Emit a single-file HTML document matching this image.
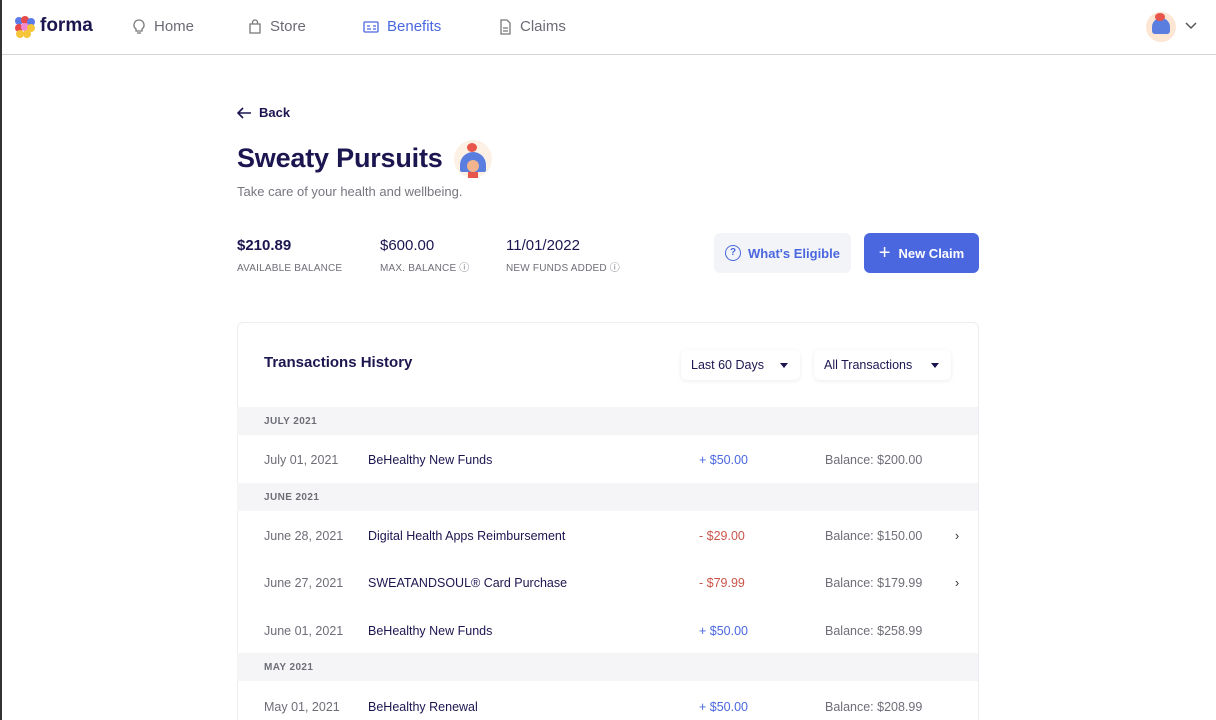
<!DOCTYPE html>
<html><head><meta charset="utf-8"><style>
*{box-sizing:border-box;margin:0;padding:0}
html,body{width:1216px;height:720px;overflow:hidden}
body{background:#fff;font-family:"Liberation Sans",sans-serif;color:#1c1650;position:relative}
.nav{position:absolute;left:0;top:0;width:1216px;height:55px;border-bottom:1px solid #d4d4d8;}
.nav .it{position:absolute;top:18px;font-size:15px;color:#6b6b76;display:flex;align-items:center;gap:8px}
.abs{position:absolute}
.lbl{font-size:10px;color:#6e6e78;letter-spacing:.2px;line-height:12px}
.val{font-size:15px;font-weight:bold;color:#1c1650}
.row{position:absolute;left:237px;width:741px;font-size:12.5px}
.sec{position:absolute;left:237px;width:741px;height:28px;background:#f5f5f7;font-size:10px;font-weight:bold;color:#6e6e78;padding:9px 0 0 27px;letter-spacing:.4px}
.row span{position:absolute}
.d{left:27px;color:#6e6e78}.n{left:131px;color:#1c1650}.a{left:462px}.b{left:588px;color:#6e6e78}
.pos{color:#4a67e0}.neg{color:#c9544a}
.chev{left:718px;color:#333}
.dd{position:absolute;top:350px;height:30px;border-radius:6px;box-shadow:0 1px 4px rgba(0,0,0,.08);font-size:12.5px;padding:8px 0 0 10px}
.dd i{position:absolute;right:12px;top:13px;border:4px solid transparent;border-top:5px solid #1c1650}
</style></head><body>
<div class="abs" style="left:0;top:0;width:2px;height:720px;background:#333;z-index:5"></div>
<div class="nav">
 <svg class="abs" style="left:14px;top:16px" width="22" height="22" viewBox="0 0 22 22">
  <circle cx="5" cy="5" r="4" fill="#5b7be8"/><circle cx="11" cy="4" r="4" fill="#e84a4a"/><circle cx="17" cy="6" r="4" fill="#5b7be8"/>
  <circle cx="5" cy="12" r="4" fill="#e84a4a"/><circle cx="11" cy="11" r="4" fill="#f08ad0"/><circle cx="17" cy="12" r="4" fill="#f5c53a"/>
  <circle cx="6" cy="18" r="4" fill="#f5c53a"/><circle cx="13" cy="18" r="4" fill="#f5c53a"/></svg>
 <div class="abs" style="left:40px;top:15px;font-size:19px;font-weight:bold;color:#1c1650">forma</div>
 <div class="it" style="left:132px"><svg width="14" height="16" viewBox="0 0 14 16" fill="none" stroke="#777" stroke-width="1.3"><path d="M7 1a5 5 0 0 0-3 9v2h6v-2a5 5 0 0 0-3-9zM5 14h4"/></svg>Home</div>
 <div class="it" style="left:248px"><svg width="14" height="16" viewBox="0 0 14 16" fill="none" stroke="#777" stroke-width="1.3"><path d="M2 5h10v9H2zM4.5 5V3.5a2.5 2.5 0 0 1 5 0V5"/></svg>Store</div>
 <div class="it" style="left:363px;color:#4a67e0"><svg width="16" height="14" viewBox="0 0 16 14" fill="none" stroke="#4a67e0" stroke-width="1.3"><rect x="1" y="2" width="14" height="10" rx="1"/><path d="M4 9h4M4 6h3M10 6h3M10 9h3"/></svg>Benefits</div>
 <div class="it" style="left:499px"><svg width="13" height="16" viewBox="0 0 13 16" fill="none" stroke="#777" stroke-width="1.3"><path d="M2 1h6l3 3v11H2zM4 9h5M4 12h5"/></svg>Claims</div>
 <div class="abs" style="left:1146px;top:12px;width:30px;height:30px;border-radius:50%;background:#fde6d4"></div>
 <div class="abs" style="left:1152px;top:18px;width:18px;height:16px;border-radius:9px 9px 3px 3px;background:#5a7de0"></div>
 <div class="abs" style="left:1155px;top:13px;width:10px;height:8px;border-radius:50%;background:#e8554a"></div>
 <svg class="abs" style="left:1185px;top:22px" width="12" height="8" viewBox="0 0 12 8" fill="none" stroke="#555" stroke-width="1.5"><path d="M1 1l5 5 5-5"/></svg>
</div>
<div class="abs" style="left:237px;top:105px;font-size:13px;font-weight:bold;display:flex;gap:7px;align-items:center"><svg width="15" height="12" viewBox="0 0 15 12" fill="none" stroke="#1c1650" stroke-width="1.6"><path d="M14 6H2M6 1L1 6l5 5"/></svg>Back</div>
<div class="abs" style="left:237px;top:143px;font-size:27px;font-weight:bold;letter-spacing:-.2px">Sweaty Pursuits</div>
<div class="abs" style="left:454px;top:140px;width:38px;height:38px;border-radius:50%;background:#fdf0e4"></div>
<div class="abs" style="left:460px;top:152px;width:26px;height:20px;border-radius:13px 13px 2px 2px;background:#5a7de0"></div>
<div class="abs" style="left:467px;top:160px;width:12px;height:12px;border-radius:50%;background:#f2b48c"></div>
<div class="abs" style="left:468px;top:172px;width:10px;height:6px;background:#e8554a"></div>
<div class="abs" style="left:467px;top:143px;width:10px;height:9px;border-radius:50%;background:#e8554a"></div>
<div class="abs" style="left:237px;top:184px;font-size:13px;color:#76767f">Take care of your health and wellbeing.</div>
<div class="abs val" style="left:237px;top:237px">$210.89</div><div class="abs lbl" style="left:237px;top:263px">AVAILABLE BALANCE</div>
<div class="abs val" style="left:380px;top:237px;font-weight:normal">$600.00</div><div class="abs lbl" style="left:380px;top:263px">MAX. BALANCE ⓘ</div>
<div class="abs val" style="left:506px;top:237px;font-weight:normal">11/01/2022</div><div class="abs lbl" style="left:506px;top:263px">NEW FUNDS ADDED ⓘ</div>
<div class="abs" style="left:714px;top:233px;width:137px;height:40px;border-radius:6px;background:#f3f4f7;color:#4a67e0;font-size:13px;font-weight:bold;display:flex;align-items:center;justify-content:center;gap:7px"><span style="display:inline-block;width:16px;height:16px;border:1.5px solid #4a67e0;border-radius:50%;font-size:10px;text-align:center;line-height:13px">?</span>What's Eligible</div>
<div class="abs" style="left:864px;top:233px;width:115px;height:40px;border-radius:6px;background:#4a67e0;color:#fff;font-size:13px;font-weight:bold;display:flex;align-items:center;justify-content:center;gap:8px"><span style="font-size:20px;font-weight:normal">+</span>New Claim</div>
<div class="abs" style="left:237px;top:322px;width:742px;height:420px;border:1px solid #eeeef2;border-radius:6px"></div>
<div class="abs" style="left:264px;top:354px;font-size:15px;font-weight:bold">Transactions History</div>
<div class="dd" style="left:681px;width:119px">Last 60 Days<i></i></div>
<div class="dd" style="left:814px;width:137px">All Transactions<i></i></div>
<div class="sec" style="top:407px">JULY 2021</div>
<div class="row" style="top:453px"><span class="d">July 01, 2021</span><span class="n">BeHealthy New Funds</span><span class="a pos">+ $50.00</span><span class="b">Balance: $200.00</span></div>
<div class="sec" style="top:483px">JUNE 2021</div>
<div class="row" style="top:529px"><span class="d">June 28, 2021</span><span class="n">Digital Health Apps Reimbursement</span><span class="a neg">- $29.00</span><span class="b">Balance: $150.00</span><span class="chev">›</span></div>
<div class="row" style="top:576px"><span class="d">June 27, 2021</span><span class="n">SWEATANDSOUL® Card Purchase</span><span class="a neg">- $79.99</span><span class="b">Balance: $179.99</span><span class="chev">›</span></div>
<div class="row" style="top:624px"><span class="d">June 01, 2021</span><span class="n">BeHealthy New Funds</span><span class="a pos">+ $50.00</span><span class="b">Balance: $258.99</span></div>
<div class="sec" style="top:653px">MAY 2021</div>
<div class="row" style="top:700px"><span class="d">May 01, 2021</span><span class="n">BeHealthy Renewal</span><span class="a pos">+ $50.00</span><span class="b">Balance: $208.99</span></div>
</body></html>
